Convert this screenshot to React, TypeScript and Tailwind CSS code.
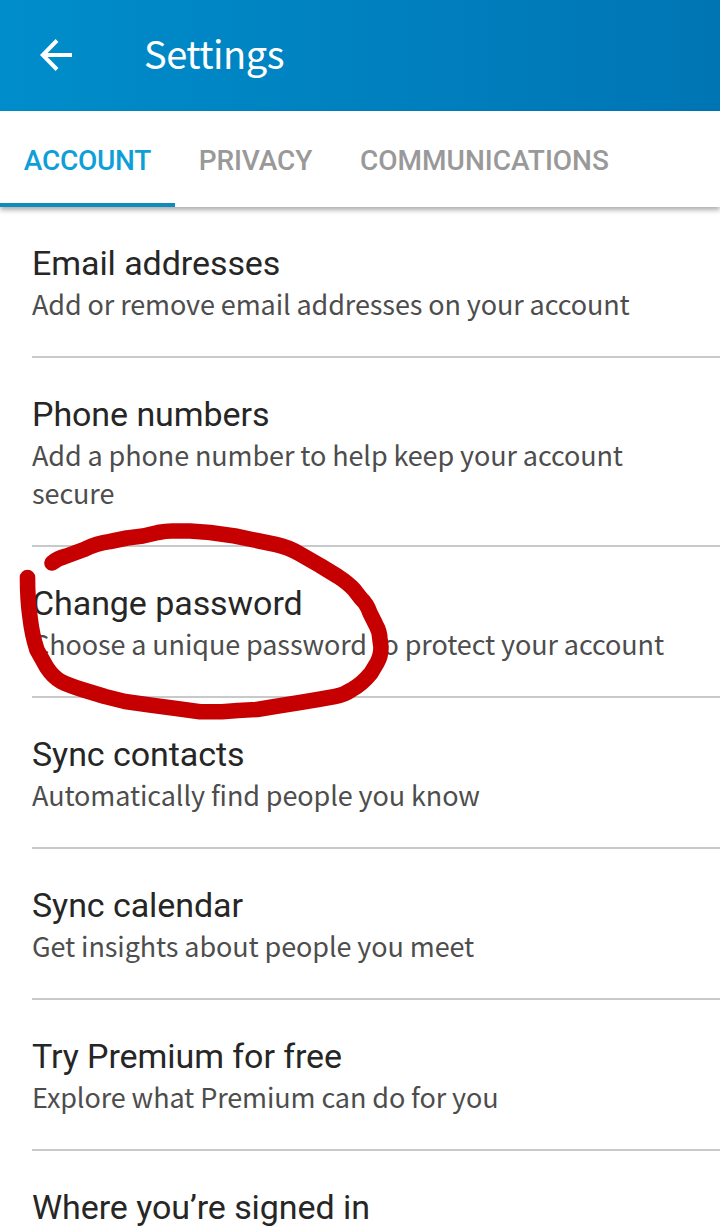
type Item = { title: string; detail: string };

const items: Item[] = [
  { title: 'Email addresses', detail: 'Add or remove email addresses on your account' },
  { title: 'Phone numbers', detail: 'Add a phone number to help keep your account secure' },
  { title: 'Change password', detail: 'Choose a unique password to protect your account' },
  { title: 'Sync contacts', detail: 'Automatically find people you know' },
  { title: 'Sync calendar', detail: 'Get insights about people you meet' },
  { title: 'Try Premium for free', detail: 'Explore what Premium can do for you' },
  { title: 'Where you’re signed in', detail: '' },
];

function Header() {
  return (
    <header className="flex h-[111px] shrink-0 items-center bg-linear-to-r from-[#008dcb] to-[#0075b4] pb-px pl-10 text-white">
      <button aria-label="Back" className="block h-8 w-8">
        <svg viewBox="0 0 32 32" className="block h-8 w-8" fill="none" stroke="currentColor" strokeWidth="4">
          <path d="M17 1.5 2.7 16 17 30.5M3 16H32" />
        </svg>
      </button>
      <h1 className="pb-[4px] pl-[72px] font-['Noto_Sans_CJK_SC',sans-serif] text-[38px] leading-[56px] tracking-[-0.5px]">Settings</h1>
    </header>
  );
}

function Tabs() {
  return (
    <nav className="relative z-10 flex h-24 shrink-0 bg-white text-[28px] font-medium text-[#999] shadow-[0_3px_5px_rgba(0,0,0,0.33)]">
      <button className="w-[175px] border-b-4 border-[#118bbd] pt-[7px] tracking-[-0.25px] text-[#0e9fd8]">ACCOUNT</button>
      <button className="w-[161px] pt-[3px] tracking-[-0.1px]">PRIVACY</button>
      <button className="w-[297px] pt-[3px]">COMMUNICATIONS</button>
    </nav>
  );
}

function Row({ title, detail }: Item) {
  return (
    <li className="ml-8 border-b-2 border-[#c8c9ca] pt-[34px] pb-[33px]">
      <h2 className="text-[34px] leading-[45px] tracking-[-0.07px] text-[#262626]">{title}</h2>
      <p className="-mt-px w-[640px] font-['Noto_Sans_CJK_SC',sans-serif] text-[27px] leading-[38px] tracking-[-0.1px] text-[#4d4d4d]">{detail}</p>
    </li>
  );
}

function Scribble() {
  return (
    <svg
      className="pointer-events-none absolute top-[516px] left-[12px] z-20 h-[212px] w-[388px]"
      viewBox="12 516 388 212"
      fill="none"
      stroke="#c60000"
      strokeWidth="15.6"
      strokeLinecap="round"
      strokeLinejoin="round"
    >
      <path d="M52 563Q58 558 65 556.500L84 549.500Q97 543 110 541.500L127 538 143 536 158 532.500Q166 531 172 531H190L210 532.500 235 536 259 541 276 544.500Q288 547 300 554L320 565.500 338 576.500Q348 583 354 589.500L361 598.500Q367 604 370 613L376 625Q380 632 380 640L381 647Q381 656 377 663L371 673Q362 684 352 689.500 344 695 335 696.500L318 699.500 300 702.500 275 706.500 257 709.500 238 710.500 222 711.700H200L180 709 150 705 125 701.500 105 696.500 82 689.500Q68 685 61 681.500 53 677 46.500 667L37 650Q32 635 30 617 27.500 600 27.500 577.500" />
    </svg>
  );
}

export default function App() {
  return (
    <main className="relative flex h-[1229px] w-[720px] flex-col overflow-hidden bg-white font-['Roboto',sans-serif]">
      <Header />
      <Tabs />
      <ul>
        {items.map((item) => (
          <Row key={item.title} {...item} />
        ))}
      </ul>
      <Scribble />
    </main>
  );
}
